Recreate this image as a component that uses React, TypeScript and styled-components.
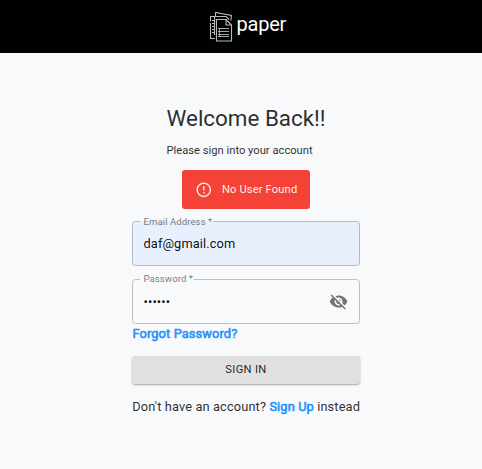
import React, { useState } from 'react';
import styled, { createGlobalStyle } from 'styled-components';

const GlobalStyle = createGlobalStyle`
  * { box-sizing: border-box; }
  body {
    margin: 0;
    background: #f7f9fb;
    color: rgba(0, 0, 0, 0.84);
    font-family: Roboto, "Liberation Sans", sans-serif;
  }
`;

const Page = styled.div`
  min-height: 469px;
`;

const Header = styled.header`
  height: 53px;
  padding-left: 209px;
  display: flex;
  align-items: center;
  background: #000101;
  color: #fff;
`;

const Logo = styled.svg`
  width: 24px;
  height: 33px;
  flex: none;
`;

const Brand = styled.span`
  margin: -6px 0 0 3.5px;
  font-size: 20px;
  line-height: 24px;
  letter-spacing: -0.22px;
`;

const Main = styled.main`
  width: 228px;
  margin: 0 0 0 132px;
  padding-top: 51px;
  display: flex;
  flex-direction: column;
`;

const Intro = styled.div`
  width: 160px;
  margin-left: 34.5px;
  white-space: nowrap;
`;

const Title = styled.h1`
  margin: 0;
  font-size: 22.4px;
  font-weight: 400;
  line-height: 28px;
`;

const Subtitle = styled.p`
  margin: 11px 0 0;
  font-size: 11.2px;
  line-height: 16px;
`;

const Alert = styled.div`
  display: flex;
  align-items: center;
  align-self: flex-start;
  width: 128px;
  height: 39px;
  margin: 11px 0 7px 50px;
  padding-left: 13px;
  border-radius: 3px;
  background: #f44336;
  color: rgba(255, 255, 255, 0.95);
  font-size: 11.2px;
  letter-spacing: 0.12px;
  white-space: nowrap;

  svg {
    width: 17.6px;
    height: 17.6px;
    margin-right: 9.4px;
    opacity: 0.9;
  }
`;

const Field = styled.fieldset<{ $filled?: boolean; $gap: number }>`
  min-width: 0;
  height: 50px;
  margin: 0 0 ${(p) => p.$gap}px;
  padding: 0 11px 0 10.5px;
  border: 1px solid ${(p) => (p.$filled ? '#b2b9c6' : '#bebfc1')};
  border-radius: 3.5px;
  background: ${(p) => (p.$filled ? '#e8f0fe' : 'transparent')};
`;

const Label = styled.legend<{ $lineHeight: number }>`
  height: 11px;
  margin-left: -3.5px;
  padding: 0 1px 0 3.5px;
  color: rgba(0, 0, 0, 0.54);
  font-size: 9.6px;
  line-height: ${(p) => p.$lineHeight}px;
  letter-spacing: 0.06px;
`;

const InputRow = styled.div`
  height: 33px;
  display: flex;
  align-items: center;
`;

const Input = styled.input`
  flex: 1;
  min-width: 0;
  padding: 0;
  border: 0;
  outline: 0;
  background: transparent;
  color: rgba(0, 0, 0, 0.95);
  font: 12.8px Roboto, "Liberation Sans", sans-serif;
  letter-spacing: 0.12px;
`;

const Toggle = styled.button`
  display: flex;
  padding: 0;
  border: 0;
  background: none;
  color: rgba(0, 0, 0, 0.54);

  svg {
    width: 19.2px;
    height: 19.2px;
  }
`;

const Link = styled.a`
  color: #1e90ff;
  font-size: 12.8px;
  font-weight: 400;
  -webkit-text-stroke: 0.55px #1e90ff;
  line-height: 18px;
  letter-spacing: 0.12px;
  text-decoration: none;
`;

const ForgotLink = styled(Link)`
  margin-left: 0.5px;
`;

const SubmitButton = styled.button`
  height: 28px;
  margin: 13px 0 0;
  padding: 0;
  border: 0;
  border-radius: 3px;
  background: #e0e0e0;
  box-shadow: 0 2px 1px -2px rgba(0, 0, 0, 0.4), 0 1px 2px rgba(0, 0, 0, 0.3);
  color: rgba(0, 0, 0, 0.87);
  font: 400 11.2px/20px Roboto, "Liberation Sans", sans-serif;
  letter-spacing: 0.32px;
`;

const Footer = styled.p`
  margin: 13px 0 0 0.3px;
  font-size: 12.8px;
  line-height: 19px;
  letter-spacing: 0.13px;
  white-space: nowrap;
`;

export default function App() {
  const [visible, setVisible] = useState(false);

  return (
    <Page>
      <GlobalStyle />
      <Header>
        <Logo viewBox="0 0 24 33" fill="none" stroke="#b8b8b8" strokeWidth="1.1">
          <path d="M6.5 6V2.5l16 3-.7 5M1.5 11.5v-5h5M1.5 13v15.5H6M5.5 25V6.5H17l3 3" />
          <path d="M3 10.5h3M3 13.5h3M3 16.5h3M3 19.5h3M3 22.5h3" />
          <path d="M7.5 9.5h9.5v5.5h5.5v16h-15zM17 9.5l5.5 5.5" />
          <path d="M9 18.5h11M9 21.5h11M9 24.5h11M9 26.5h11" strokeWidth="0.9" />
          <path d="M10.5 18v9" strokeWidth="0.8" />
        </Logo>
        <Brand>paper</Brand>
      </Header>
      <Main>
        <Intro>
          <Title>Welcome Back!!</Title>
          <Subtitle>Please sign into your account</Subtitle>
        </Intro>
        <Alert role="alert">
          <svg viewBox="0 0 24 24" fill="currentColor">
            <path d="M11 15h2v2h-2zm0-8h2v6h-2zm.99-5C6.47 2 2 6.48 2 12s4.47 10 9.99 10C17.52 22 22 17.52 22 12S17.52 2 11.99 2zM12 20c-4.42 0-8-3.58-8-8s3.58-8 8-8 8 3.58 8 8-3.58 8-8 8z" />
          </svg>
          No User Found
        </Alert>
        <Field $filled $gap={8}>
          <Label $lineHeight={11}>Email Address *</Label>
          <InputRow>
            <Input type="email" defaultValue="daf@gmail.com" />
          </InputRow>
        </Field>
        <Field $gap={1}>
          <Label $lineHeight={9}>Password *</Label>
          <InputRow>
            <Input type={visible ? 'text' : 'password'} defaultValue="secret" />
            <Toggle type="button" aria-label="Toggle password visibility" onClick={() => setVisible(!visible)}>
              <svg viewBox="0 0 24 24" fill="currentColor">
                <path d="M12 7c2.76 0 5 2.24 5 5 0 .65-.13 1.26-.36 1.83l2.92 2.92c1.51-1.26 2.7-2.89 3.43-4.75-1.73-4.39-6-7.5-11-7.5-1.4 0-2.74.25-3.98.7l2.16 2.16C10.74 7.13 11.35 7 12 7zM2 4.27l2.28 2.28.46.46C3.08 8.3 1.78 10.02 1 12c1.73 4.39 6 7.5 11 7.5 1.55 0 3.03-.3 4.38-.84l.42.42L19.73 22 21 20.73 3.27 3 2 4.27zM7.53 9.8l1.55 1.55c-.05.21-.08.43-.08.65 0 1.66 1.34 3 3 3 .22 0 .44-.03.65-.08l1.55 1.55c-.67.33-1.41.53-2.2.53-2.76 0-5-2.24-5-5 0-.79.2-1.53.53-2.2zm4.31-.78 3.15 3.15.02-.16c0-1.66-1.34-3-3-3l-.17.01z" />
              </svg>
            </Toggle>
          </InputRow>
        </Field>
        <ForgotLink>Forgot Password?</ForgotLink>
        <SubmitButton type="button">SIGN IN</SubmitButton>
        <Footer>
          Don't have an account? <Link>Sign Up</Link> instead
        </Footer>
      </Main>
    </Page>
  );
}
